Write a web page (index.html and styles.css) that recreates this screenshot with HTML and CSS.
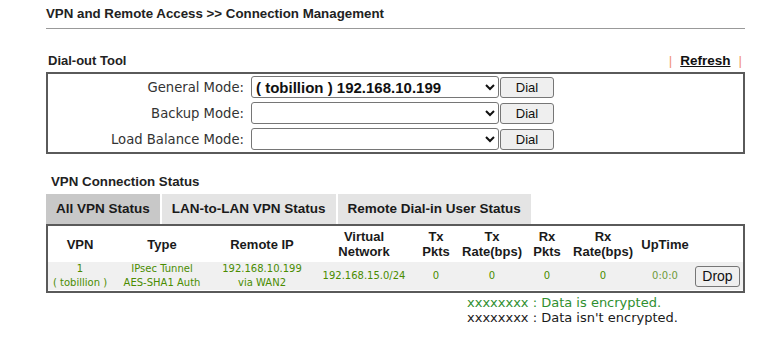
FILE: index.html
```html
<html lang="en">

<head>
	<title>Connection Management</title>
	<meta http-equiv="Content-Type" content="text/html; charset=UTF-8">
	<meta name="viewport" content="width=device-width,initial-scale=1">
	<link rel="stylesheet" href="styles.css">
</head>

<body>
	<div class="page">
		<div class="page-title">VPN and Remote Access &gt;&gt; Connection Management</div>

		<div class="section-head">
			<span class="section-name">Dial-out Tool</span>
			<span class="refresh"><span class="bar">|</span><a href="#">Refresh</a><span class="bar">|</span></span>
		</div>
		<div class="dial-box">
			<div class="dial-row">
				<label class="dial-label">General Mode:</label>
				<select class="mode-select selected">
					<option>( tobillion ) 192.168.10.199</option>
				</select>
				<button class="btn btn-dial">Dial</button>
			</div>
			<div class="dial-row">
				<label class="dial-label">Backup Mode:</label>
				<select class="mode-select">
					<option></option>
				</select>
				<button class="btn btn-dial">Dial</button>
			</div>
			<div class="dial-row">
				<label class="dial-label">Load Balance Mode:</label>
				<select class="mode-select">
					<option></option>
				</select>
				<button class="btn btn-dial">Dial</button>
			</div>
		</div>

		<div class="section-name status-title">VPN Connection Status</div>
		<div class="tabs">
			<div class="tab active">All VPN Status</div>
			<div class="tab">LAN-to-LAN VPN Status</div>
			<div class="tab">Remote Dial-in User Status</div>
		</div>
		<div class="status-box">
			<div class="status-grid">
				<div class="th">VPN</div>
				<div class="th">Type</div>
				<div class="th">Remote IP</div>
				<div class="th">Virtual<br>Network</div>
				<div class="th">Tx<br>Pkts</div>
				<div class="th">Tx<br>Rate(bps)</div>
				<div class="th">Rx<br>Pkts</div>
				<div class="th">Rx<br>Rate(bps)</div>
				<div class="th">UpTime</div>
				<div class="th"></div>

				<div class="td">1<br>( tobillion )</div>
				<div class="td">IPsec Tunnel<br>AES-SHA1 Auth</div>
				<div class="td">192.168.10.199<br>via WAN2</div>
				<div class="td">192.168.15.0/24</div>
				<div class="td">0</div>
				<div class="td">0</div>
				<div class="td">0</div>
				<div class="td">0</div>
				<div class="td uptime">0:0:0</div>
				<div class="td"><button class="btn btn-drop">Drop</button></div>
			</div>
		</div>
		<div class="legend">
			<div class="legend-on">xxxxxxxx : Data is encrypted.</div>
			<div>xxxxxxxx : Data isn't encrypted.</div>
		</div>
	</div>
</body>

</html>
```

FILE: styles.css
```css
body {
	margin: 0;
	font-family: "Liberation Sans", Arial, sans-serif;
	color: #222;
	background: #fff;
}

.page {
	width: 699px;
	margin-left: 46px;
	padding-top: 6px;
}

.page-title {
	font-size: 13.3px;
	font-weight: bold;
	line-height: 16px;
	padding-bottom: 6px;
	border-bottom: 1px solid #999;
}

.section-head {
	display: flex;
	justify-content: space-between;
	align-items: center;
	margin-top: 24px;
	margin-bottom: 3px;
	line-height: 16px;
}

.section-name {
	font-size: 13px;
	font-weight: bold;
	padding-left: 2px;
	line-height: 16px;
}

.refresh {
	display: flex;
	align-items: center;
	font-size: 13.5px;
	font-weight: bold;
	padding-right: 3px;
}

.refresh a {
	color: #111;
	text-decoration: underline;
}

.refresh .bar {
	color: #f29479;
	font-weight: normal;
	margin: 0 8px;
}

.refresh .bar:last-child {
	margin-right: 0;
}

.dial-box {
	border: 2px solid #5a5a5a;
}

.dial-row {
	display: flex;
	align-items: center;
	height: 26px;
}

.dial-label {
	width: 196px;
	text-align: right;
	font-family: "DejaVu Sans", Verdana, sans-serif;
	font-size: 13.2px;
	color: #333;
	margin-right: 7px;
}

.mode-select {
	width: 248px;
	height: 22px;
	border: 1px solid #767676;
	border-radius: 3px;
	background: #fff;
	font-family: "Liberation Sans", Arial, sans-serif;
	font-size: 15px;
	color: #111;
}

.mode-select.selected {
	font-weight: bold;
}

.btn {
	background: #efefef;
	border: 1px solid #767676;
	border-radius: 3px;
	font-family: "Liberation Sans", Arial, sans-serif;
	color: #111;
	padding: 0;
}

.btn-dial {
	width: 54px;
	height: 21px;
	margin-left: 1px;
	font-size: 13px;
}

.status-title {
	margin-top: 20px;
	margin-bottom: 4px;
	padding-left: 5px;
	font-size: 13.3px;
}

.tabs {
	display: flex;
	gap: 2px;
}

.tab {
	background: #e4e4e4;
	font-size: 13.5px;
	font-weight: bold;
	line-height: 30px;
	padding: 0 10px;
	color: #1a1a1a;
}

.tab.active {
	background: #c8c8c8;
}

.status-box {
	border: 2px solid #5a5a5a;
	padding-bottom: 1px;
}

.status-grid {
	display: grid;
	grid-template-columns: 64px 100px 100px 104px 40px 72px 38px 74px 50px 1fr;
	grid-template-rows: 36px 28px;
}

.th {
	display: flex;
	align-items: center;
	justify-content: center;
	text-align: center;
	font-size: 13px;
	font-weight: bold;
	line-height: 15px;
	color: #1a1a1a;
}

.td {
	display: flex;
	align-items: center;
	justify-content: center;
	text-align: center;
	background: #f0f0f0;
	font-family: "DejaVu Sans", Verdana, sans-serif;
	font-size: 10px;
	line-height: 14px;
	color: #4a8c00;
	white-space: nowrap;
}

.td.uptime {
	color: #6f9a3a;
}

.td:last-child {
	justify-content: flex-start;
	padding-left: 5px;
}

.btn-drop {
	width: 45px;
	height: 21px;
	font-size: 14px;
}

.legend {
	padding-left: 421px;
	font-family: "DejaVu Sans", Verdana, sans-serif;
	font-size: 13px;
	line-height: 15px;
	color: #1a1a1a;
	padding-top: 2px;
}

.legend-on {
	color: #2f8f2f;
}
```
